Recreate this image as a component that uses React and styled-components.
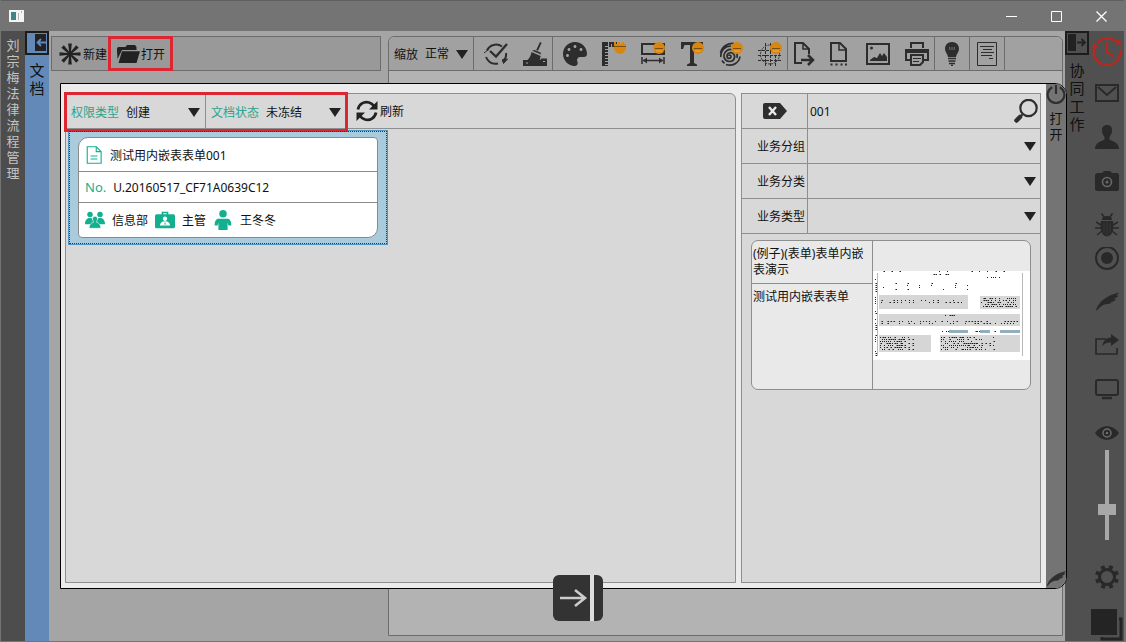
import React, { useState } from 'react';
import styled, { createGlobalStyle, css } from 'styled-components';
import { FaPalette } from 'react-icons/fa';

const GlobalStyle = createGlobalStyle`
  * {
    box-sizing: border-box;
  }
  body {
    margin: 0;
    background: #747474;
  }
  body, button, input, select {
    font-family: 'Noto Sans', 'Noto Sans CJK SC', sans-serif;
    font-size: 12px;
    color: #111;
  }
  button {
    padding: 0;
    border: none;
    background: none;
    cursor: pointer;
  }
  svg {
    display: block;
    flex: none;
  }
`;

/* ---------- window ---------- */

const Window = styled.div`
  position: relative;
  display: flex;
  flex-direction: column;
  height: 100vh;
  padding: 0 2px 1px 1px;
  background: #747474;
`;

const TitleBar = styled.header`
  display: flex;
  align-items: center;
  justify-content: space-between;
  flex: none;
  height: 31px;
  padding-left: 8px;
  border-top: 1px solid #606060;
`;

const WindowControls = styled.div`
  display: flex;
  height: 100%;
`;

const WindowButton = styled.button`
  display: flex;
  justify-content: center;
  align-items: center;
  width: 45px;
  color: #fff;
`;

const Body = styled.div`
  display: flex;
  flex: 1;
  min-height: 0;
`;

const SideBar = styled.aside`
  display: flex;
  flex-direction: column;
  align-items: center;
  flex: none;
  width: 24px;
  background: ${(props) => props.$bg};
`;

const VerticalText = styled.span`
  width: ${(props) => props.$size || 13}px;
  margin-top: 6px;
  font-size: ${(props) => props.$size || 13}px;
  line-height: ${(props) => (props.$size ? 18 : 16)}px;
  word-break: break-all;
  color: ${(props) => props.$color || '#111'};
`;

const ToggleButton = styled.button`
  display: flex;
  justify-content: center;
  align-items: center;
  width: 24px;
  height: 24px;
  border: 2px solid #1c1c1c;
  color: ${(props) => props.$color};
`;

const Workspace = styled.main`
  display: flex;
  flex: 1;
  min-width: 0;
  gap: 7px;
  padding: 5px 2px 5px 2px;
  background: #a5a5a5;
`;

/* ---------- toolbars ---------- */

const FileBar = styled.div`
  display: flex;
  flex: none;
  width: 330px;
  height: 35px;
  padding-left: 4px;
  border: 1px solid #6c6c6c;
  background: #999;
`;

const TextButton = styled.button`
  display: flex;
  align-items: center;
  gap: 1px;
  padding: 0 2px;
  ${(props) =>
    props.$marked &&
    css`
      padding: 0 7px;
      outline: 3px solid #dc2631;
      outline-offset: -2px;
    `}
`;

const Canvas = styled.section`
  flex: 1;
  min-width: 0;
  border: 1px solid #6c6c6c;
  border-radius: 6px 6px 0 0;
  background: #b3b3b3;
`;

const ToolBar = styled.div`
  display: flex;
  height: 34px;
  border-bottom: 1px solid #6c6c6c;
  border-radius: 6px 6px 0 0;
  background: #a1a1a1;
`;

const ToolGroup = styled.div`
  display: flex;
  border-right: 1px solid #6c6c6c;
`;

const ToolButton = styled.button`
  display: flex;
  justify-content: center;
  align-items: center;
  width: ${(props) => props.$width || 39}px;
  padding-left: ${(props) => (props.$centered ? 0 : 5)}px;
  color: #2d2d2d;
`;

const Field = styled.label`
  display: flex;
  align-items: center;
  gap: 7px;
  width: ${(props) => props.$width}px;
  padding: 0 5px;
`;

const FieldName = styled.span`
  flex: none;
  color: ${(props) => props.$color || '#111'};
`;

const Select = styled.select`
  flex: 1;
  min-width: 0;
  height: 24px;
  padding: 0;
  border: none;
  outline: none;
  appearance: none;
  background: transparent;
`;

/* ---------- open dialog ---------- */

const Dialog = styled.div`
  position: absolute;
  top: 83px;
  right: 59px;
  bottom: 53px;
  left: 60px;
  display: flex;
  border: 1px solid #000;
  border-radius: 0 12px 12px 0;
  background: #ebebeb;
  overflow: hidden;
`;

const Panels = styled.div`
  display: flex;
  flex: 1;
  gap: 5px;
  min-width: 0;
  padding: 9px 5px 5px 4px;
`;

const ListPanel = styled.section`
  flex: 1;
  min-width: 0;
  border: 1px solid #8e8e8e;
  border-radius: 0 6px 0 0;
  background: #d8d8d8;
`;

const FilterBar = styled.div`
  display: flex;
  height: 35px;
  border-bottom: 1px solid #8e8e8e;
`;

const Filters = styled.div`
  display: flex;
  height: 36px;
  outline: 3px solid #dc2631;
  outline-offset: -1px;
  margin-right: 7px;

  label + label {
    border-left: 1px solid #8e8e8e;
  }
`;

const SelectedItem = styled.div`
  width: 320px;
  margin: 1px 0 0 2px;
  padding: 6px 9px;
  border: 1px solid #4f95c4;
  outline: 1px dotted #123f68;
  outline-offset: -2px;
  background: #a9cbdb;
`;

const DocCard = styled.article`
  border: 1px solid #8a8a8a;
  border-radius: 10px 4px 10px 4px;
  background: #fff;
`;

const DocRow = styled.div`
  display: flex;
  align-items: center;
  gap: 7px;
  height: ${(props) => props.$height}px;
  padding: 0 6px;
  color: #13b090;

  & + & {
    border-top: 1px solid #8a8a8a;
  }
`;

const DocNumber = styled.span`
  font-size: 13px;
`;

const DocText = styled.span`
  color: #111;
`;

const SearchPanel = styled.section`
  flex: none;
  width: 300px;
  border: 1px solid #8e8e8e;
  background: #d8d8d8;
`;

const SearchRow = styled.div`
  display: grid;
  grid-template-columns: 65px 1fr;
  height: 35px;
  border-bottom: 1px solid #8e8e8e;
`;

const SearchLabel = styled.label`
  display: flex;
  justify-content: flex-end;
  align-items: center;
  padding-right: 2px;
`;

const ClearButton = styled.button`
  display: flex;
  justify-content: center;
  align-items: center;
`;

const SearchValue = styled.div`
  display: flex;
  align-items: center;
  min-width: 0;
  padding: 0 ${(props) => (props.$wide ? 2 : 4)}px 0 2px;
  border-left: 1px solid #8e8e8e;
`;

const SearchInput = styled.input`
  flex: 1;
  min-width: 0;
  padding: 0;
  border: none;
  outline: none;
  background: transparent;
`;

const TemplateCard = styled.article`
  display: grid;
  grid-template-columns: 121px 1fr;
  height: 150px;
  margin: 6px 9px;
  border: 1px solid #8e8e8e;
  border-radius: 7px;
  background: #e9e9e9;
`;

const TemplateInfo = styled.div`
  border-right: 1px solid #8e8e8e;
`;

const TemplateText = styled.p`
  margin: 0;
  padding: 5px 1px;
  line-height: 16px;

  & + & {
    border-top: 1px solid #8e8e8e;
  }
`;

const Preview = styled.div`
  display: flex;
  align-items: center;
`;

const DialogTab = styled.div`
  display: flex;
  flex-direction: column;
  align-items: center;
  justify-content: space-between;
  flex: none;
  width: 20px;
  background: #747474;
  color: #303030;
`;

const DialogTabHead = styled.div`
  display: flex;
  flex-direction: column;
  align-items: center;
`;

/* ---------- right rail ---------- */

const Rail = styled.nav`
  display: flex;
  flex-direction: column;
  align-items: center;
  flex: none;
  width: 35px;
  background: #505050;
`;

const RailButton = styled.button`
  display: flex;
  justify-content: center;
  align-items: ${(props) => props.$align || 'center'};
  flex: none;
  width: 100%;
  height: ${(props) => props.$height || 44}px;
  color: #292929;
`;

const Slider = styled.input`
  flex: none;
  width: 18px;
  height: 90px;
  margin: 5px 0 15px;
  appearance: none;
  background: transparent;
  writing-mode: vertical-lr;
  direction: rtl;

  &::-webkit-slider-runnable-track {
    width: 4px;
    height: 100%;
    margin: 0 auto;
    background: #a8a8a8;
  }
  &::-webkit-slider-thumb {
    appearance: none;
    width: 18px;
    height: 11px;
    margin-left: -7px;
    background: #a8a8a8;
  }
`;

const DockButton = styled.button`
  position: absolute;
  left: 553px;
  bottom: 21px;
  width: 50px;
  height: 46px;
  border-radius: 6px;
  background: #333;
  overflow: hidden;
`;

/* ---------- icons ---------- */

const Icon = ({ size = 24, children, ...rest }) => (
  <svg
    width={size}
    height={size}
    viewBox="0 0 24 24"
    fill="none"
    stroke="currentColor"
    strokeWidth="2"
    aria-hidden="true"
    {...rest}
  >
    {children}
  </svg>
);

const Arrow = () => (
  <svg width="12" height="10" viewBox="0 0 12 10" fill="#222" aria-hidden="true">
    <path d="M0 1h12L6 10z" />
  </svg>
);

// orange helmet badge on the "clear style" tools
const Badge = () => (
  <g stroke="none">
    <circle cx="18" cy="6" r="6" fill="#d8860f" />
    <path d="M14 6h8v1h-8z" fill="#7c4d10" />
    <path d="M15 9h6" stroke="#efae4a" strokeWidth="1" />
  </g>
);

const AsteriskIcon = () => (
  <Icon fill="#222" stroke="none">
    {[0, 45, 90, 135, 180, 225, 270, 315].map((angle) => (
      <path key={angle} d="M11.200 12L10.200 1.500h3.600L12.800 12z" transform={`rotate(${angle} 12 12)`} />
    ))}
  </Icon>
);

const FolderIcon = () => (
  <Icon fill="#222" stroke="none">
    <path d="M1 9V6.500L2 5h7.500l1.500-2h8l1.500 2v3H6L1.500 17z" />
    <path d="M6 9.200h18L20.500 21H2.500z" />
  </Icon>
);

const CheckCycleIcon = () => (
  <Icon size={24}>
    <path d="M6 9l6 5.500L23 2" strokeWidth="2.300" />
    <path d="M3 8.500C5.500 2.500 13 1 18 4.500M22 11c.5 3.500-1 6.500-3.500 8.500M2 15c2 5 6.500 7.500 12 6.500" />
    <path d="M0 11l4.500-3.500M23.500 17l-5 .5 1 4z" fill="currentColor" strokeWidth="1" />
  </Icon>
);

const BroomIcon = () => (
  <Icon fill="currentColor" stroke="none">
    <path d="M17 0l1.600.7-3.600 8-1.800-.8zM11.500 8l6 2.500.7 2-9-3.700zM8.500 10l9.200 4-1 4H4.500c2-2 3.500-4.500 4-8z" />
    <path d="M0 18h17l1.500-1.500H24V24H0z" />
    <path d="M3 21h2M20 19.500h2" stroke="#a1a1a1" strokeWidth="1" />
  </Icon>
);

const RulerIcon = () => (
  <Icon fill="currentColor" stroke="none">
    <path d="M0 0h6v24H0zM7 0h8v5H7z" />
    <path d="M3 4.500h3M3 7.500h3M3 10.500h3M3 13.500h3M3 16.500h3M3 19.500h3M3 22.500h3M9.500 2v3M12.500 2v3" stroke="#a1a1a1" strokeWidth="1" />
    <path d="M12 0h2v2h2V0h2v2h2V0h2v2h2v3c0 4-3 7-6 7s-6-3-6-7z" fill="#d8860f" />
    <path d="M12 4h12v1H12z" fill="#7c4d10" />
  </Icon>
);

const WidthIcon = () => (
  <Icon>
    <path d="M1 2h22v10H1z" />
    <path d="M1 15v7M23 15v7M2 18.500h20" strokeWidth="1.500" />
    <path d="M2 18.500l4-3v6zM22 18.500l-4-3v6z" fill="currentColor" stroke="none" />
    <Badge />
  </Icon>
);

const TypeIcon = () => (
  <Icon fill="currentColor" stroke="none">
    <path d="M1 0h22v7h-2l-1.500-4H14v18l3 1.500V24H7v-1.500l3-1.500V3H4.500L3 7H1z" />
    <Badge />
  </Icon>
);

const SpiralIcon = () => (
  <Icon strokeWidth="1.700">
    <path d="M10 14c0-1.500 2.500-1 2 1s-4 2-4-1 4-4.500 6.500-2 .5 7.500-3.500 7.500-6.500-3-6-6.500S9 7 13 7.500s6 4.500 5 8.500" />
    <path d="M2 15C1 8.500 6 4 12 4M1.500 11C3 4 9 1 15 1.500M7 22.500c6 2 13-1 14-8M3 18.500c.7 1 1.500 2 2.500 2.700" />
    <Badge />
  </Icon>
);

const GridIcon = () => (
  <Icon strokeWidth="1">
    <path d="M0 8.500h24M0 13.500h24M0 18.500h24M7.500 1v23M12.500 1v23M17.500 1v23" strokeDasharray="3 1" />
    <circle cx="12" cy="12.500" r="9.500" strokeDasharray="2 1" />
    <Badge />
  </Icon>
);

const PageExportIcon = () => (
  <Icon>
    <path d="M17 13V8l-6-6H3v20h7" transform="translate(-1 -1)" />
    <path d="M10 1v6h6" strokeWidth="1.500" />
    <path d="M8 18h11M15 13l5 5-5 5" strokeWidth="2.500" />
  </Icon>
);

const PageDotsIcon = () => (
  <Icon>
    <path d="M4 18V1h9l6 6v12H3" />
    <path d="M12 1v7h7" strokeWidth="1.500" />
    <path d="M3.500 22.500h2M8.500 22.500h2M13.500 22.500h2M18 22.500h2" />
  </Icon>
);

const ImageIcon = () => (
  <Icon>
    <path d="M1 2h22v20H1z" />
    <path d="M4 19v-1l4-3 3 1 3-5 2 3 2-3 3 4v4z" fill="currentColor" stroke="none" />
    <circle cx="5.500" cy="6" r="1.500" fill="currentColor" stroke="none" />
  </Icon>
);

const PrinterIcon = () => (
  <Icon>
    <path d="M6 6V1h12v5" />
    <path d="M5 18H1V8h22v10h-4" />
    <path d="M2 8h20v3H2z" fill="currentColor" stroke="none" />
    <path d="M6 13h12v7l-3 3H6z" />
    <path d="M8 16.500h8M8 19.500h6" strokeWidth="1" />
  </Icon>
);

const BulbIcon = () => (
  <Icon fill="currentColor" stroke="none">
    <path d="M12 0c4.500 0 7 3.200 7 6.800 0 3.500-2.500 5-3 8.200H8c-.5-3.200-3-4.700-3-8.200C5 3.200 7.500 0 12 0z" />
    <path d="M9.500 5l.5 3M12 5v3M14.500 5l-.5 3" stroke="#a1a1a1" strokeWidth=".6" />
    <path d="M8 16.500h8M8.500 19h7M9 21.500h6M11 23.500h2" stroke="currentColor" strokeWidth="1.400" />
  </Icon>
);

const SheetIcon = () => (
  <Icon strokeWidth="1">
    <path d="M2.500.5h19v23h-19z" />
    <path d="M5 4.500h14M8 7.500h9M6 10.500h13M6 13.500h11M14 16.500h4" />
  </Icon>
);

const RefreshIcon = () => (
  <Icon stroke="#222" strokeWidth="2.800">
    <path d="M3 10.500C4 5 9 2 14 3.500c2 .6 3.500 1.500 5 3.500M21 13.500c-1 5.500-6 8.500-11 7-2-.6-3.500-1.500-5-3.500" />
    <path d="M22.500 2v8.500H14zM1.500 22v-8.500H10z" fill="#222" stroke="none" />
  </Icon>
);

const DocIcon = () => (
  <Icon size={18} strokeWidth="1.500">
    <path d="M3 1h12l6.500 6.500V23H3z" />
    <path d="M15 1v6.500h6.500M7.500 13.300h9M7.500 17.300h9" />
  </Icon>
);

const TeamIcon = () => (
  <Icon size={20} fill="currentColor" stroke="none">
    <circle cx="6" cy="5.500" r="3.300" />
    <circle cx="18" cy="5.500" r="3.300" />
    <path d="M0 17c0-5 2-6.500 4.500-7.500h3L12 14l4.500-4.500h3C22 10.500 24 12 24 17z" />
    <path
      d="M12 7.500c2 0 3.200 1.500 3 3.500-.1 1.200-.6 2-1 2.600v1.200c2.500.8 5 2.200 5 7.200H5c0-5 2.500-6.400 5-7.200v-1.200c-.4-.6-.9-1.400-1-2.600-.2-2 1-3.500 3-3.500z"
      stroke="#fff"
      strokeWidth=".8"
    />
  </Icon>
);

const BadgeCaseIcon = () => (
  <Icon size={20} fill="currentColor" stroke="none">
    <path d="M8 5V2h8v3h6a2 2 0 0 1 2 2v13a2 2 0 0 1-2 2H2a2 2 0 0 1-2-2V7a2 2 0 0 1 2-2zm2 0h4V4h-4z" />
    <circle cx="12" cy="10.500" r="2.600" fill="#fff" />
    <path d="M6 18.500c0-3 2-5 6-5s6 2 6 5z" fill="#fff" />
    <path d="M12 14l1 3.500h-2z" />
  </Icon>
);

const PersonIcon = () => (
  <Icon size={20} fill="currentColor" stroke="none">
    <circle cx="12" cy="4.500" r="4.500" />
    <path d="M7 10.500h10c3.500 0 5 3 5 8h-3.500L17.500 15v9h-11v-9l-1 3.500H2c0-5 1.500-8 5-8z" />
  </Icon>
);

const ClearIcon = () => (
  <svg width="24" height="16" viewBox="0 0 24 16" aria-hidden="true">
    <path d="M2 0h15l7 8-7 8H2a2 2 0 0 1-2-2V2a2 2 0 0 1 2-2z" fill="#2e2e2e" />
    <path d="M6 4l7 8M13 4l-7 8" stroke="#e8e8e8" strokeWidth="2.400" />
  </svg>
);

const SearchIcon = () => (
  <Icon stroke="#2e2e2e">
    <circle cx="14.500" cy="9" r="8.200" strokeWidth="2.200" />
    <path d="M8.500 15.500L6 18" />
    <path d="M6 18l-3.500 3.500" strokeWidth="4.500" strokeLinecap="round" />
  </Icon>
);

const PowerIcon = () => (
  <Icon size={20} strokeWidth="2.600">
    <path d="M7.500 4a10 10 0 1 0 9 0" />
    <path d="M12 1v11" />
  </Icon>
);

const FeatherIcon = ({ size = 24 }) => (
  <Icon size={size} fill="currentColor" stroke="none">
    <path d="M1 21C3 15 9 7 24 3.500c-.5 1.500-2 2.500-3 2.800l2.500.4c-1.500 1.800-3.500 2.800-5 3l2.500.8c-2 2-4 2.500-6 2.800l1.500.7c-2 1-4 1-6 1.300-3.500.8-6 3-8.500 6.200z" />
  </Icon>
);

const ClockIcon = () => (
  <Icon size={30} stroke="#b5291f" strokeWidth="2">
    <path d="M2.300 8.500A10.600 10.600 0 1 0 22.400 10.500" />
    <path d="M4.500 5.500A10.600 10.600 0 0 1 19.500 4.500" />
    <path d="M12 5v8l5 3" strokeWidth="1.700" />
    <path d="M0 10l1.500-5 4 4zM24 7l-6-.5 4-4z" fill="#b5291f" stroke="none" />
  </Icon>
);

const MailIcon = () => (
  <Icon>
    <path d="M1 4h22v16H1zM3 6l9 8 9-8" />
  </Icon>
);

const UserIcon = () => (
  <Icon fill="currentColor" stroke="none">
    <path d="M12 0c3.500 0 5.500 2.500 5 6-.2 3-1.500 4.500-2.500 6v2.500c2 1.500 9.500 2.500 9.500 9.500H0c0-7 7.500-8 9.500-9.500V12C8.500 10.500 7.200 9 7 6c-.5-3.500 1.500-6 5-6z" />
  </Icon>
);

const CameraIcon = () => (
  <Icon fill="currentColor" stroke="none">
    <path d="M3 4h4l2-2h6l2 2h5a2 2 0 0 1 2 2v14a2 2 0 0 1-2 2H2a2 2 0 0 1-2-2V6c0-1 1-2 3-2z" />
    <circle cx="12" cy="13" r="4.500" stroke="#686868" strokeWidth="1.600" />
    <circle cx="12" cy="13" r="1.500" fill="#686868" />
  </Icon>
);

const BugIcon = () => (
  <Icon strokeWidth="1.600">
    <path d="M7 7c0-3 2-4 5-4s5 1 5 4z" fill="currentColor" stroke="none" />
    <path d="M6 8h12c1.500 9-1 15-6 15.500C7 23 4.500 17 6 8z" fill="currentColor" stroke="none" />
    <path d="M9 4L6.500.5M15 4L17.500.5M6 12L1 9M6 15H0M7 18l-5 4M18 12l5-3M18 15h6M17 18l5 4" />
    <path d="M12 8v15M9 10v10M15 10v10" stroke="#505050" strokeWidth=".4" />
  </Icon>
);

const RecordIcon = () => (
  <Icon>
    <circle cx="12" cy="11" r="11" />
    <circle cx="12" cy="11" r="6" fill="currentColor" stroke="none" />
  </Icon>
);

const ShareIcon = () => (
  <Icon strokeWidth="1.700">
    <path d="M11 6H1v15h21v-6" />
    <path d="M16 1l8 6-8 6v-3.500c-4 0-6 .5-9 4C8 8 11 5 16 4.500z" fill="currentColor" stroke="none" />
  </Icon>
);

const MonitorIcon = () => (
  <Icon>
    <rect x="1" y="3" width="22" height="15" rx="2" />
    <path d="M7 21h10" strokeWidth="2.500" />
  </Icon>
);

const EyeIcon = () => (
  <Icon fill="currentColor" stroke="none">
    <path d="M0 12c6-9 18-9 24 0-6 9-18 9-24 0z" />
    <circle cx="12" cy="12" r="4" stroke="#6c6c6c" strokeWidth="1.500" />
    <circle cx="12" cy="12" r="1.300" fill="#6c6c6c" />
  </Icon>
);

const GearIcon = () => (
  <Icon>
    <circle cx="12" cy="12" r="7.500" strokeWidth="3" />
    {[22, 67, 112, 157, 202, 247, 292, 337].map((angle) => (
      <path key={angle} d="M12 4V0" strokeWidth="4" transform={`rotate(${angle} 12 12)`} />
    ))}
  </Icon>
);

const LayersIcon = () => (
  <svg width="33" height="32" viewBox="0 0 33 32" aria-hidden="true">
    <path d="M12 10h19v20H12z" fill="none" stroke="#242424" strokeWidth="3" />
    <path d="M0 0h29v28H0z" fill="#505050" />
    <path d="M1 0h26v26H1z" fill="#242424" />
  </svg>
);

const specks = (x, y, width, height, step, seed) => {
  let d = '';
  let n = seed;
  for (let py = y; py < y + height; py += 2) {
    for (let px = x; px < x + width; px += step) {
      n = (n * 1103515245 + 12345) % 2147483648;
      if ((n >> 12) % 5 < 3) d += `M${px} ${py}h${1 + ((n >> 8) % 2)}v1h-1z`;
    }
  }
  return d;
};

const FormPreview = () => (
  <svg width="100%" viewBox="0 0 157 89" role="img" aria-label="表单预览">
    <path d="M0 0h157v89H0z" fill="#fff" />
    <path
      d="M6 24h89v14H6zM107 25h40v13h-40zM6 43h141v12H6zM6 64h52v17H6zM67 64h80v17H67z"
      fill="#d6d6d6"
    />
    <path d="M76 59h19v3H76zM107 59h10v3h-10zM127 59h20v3h-20z" fill="#91aebd" />
    <path d="M4.500 2v83M149.500 2v83" stroke="#b8b8b8" strokeWidth="1" />
    <path
      d={
        specks(2, 0, 140, 2, 8, 7) +
        specks(58, 3, 18, 2, 2, 11) +
        specks(114, 6, 14, 2, 2, 5) +
        specks(10, 12, 85, 8, 12, 21) +
        specks(8, 29, 84, 4, 4, 31) +
        specks(108, 27, 36, 10, 2, 41) +
        specks(70, 44, 12, 2, 2, 3) +
        specks(8, 50, 138, 3, 3, 51) +
        specks(69, 60, 7, 2, 2, 9) +
        specks(102, 60, 5, 2, 2, 13) +
        specks(119, 60, 6, 2, 2, 17) +
        specks(7, 66, 24, 14, 2, 61) +
        specks(31, 66, 12, 14, 4, 67) +
        specks(68, 66, 40, 14, 2, 71) +
        specks(108, 66, 15, 14, 4, 77) +
        specks(2, 8, 2, 78, 3, 81)
      }
      fill="#222"
    />
  </svg>
);

/* ---------- data ---------- */

const toolGroups = [
  [
    { name: '校验', icon: CheckCycleIcon },
    { name: '清理', icon: BroomIcon },
  ],
  [
    { name: '配色', icon: () => <FaPalette size={24} /> },
    { name: '标尺', icon: RulerIcon },
    { name: '宽度', icon: WidthIcon },
    { name: '字体', icon: TypeIcon },
    { name: '指纹', icon: SpiralIcon },
    { name: '网格', icon: GridIcon },
  ],
  [
    { name: '导出', icon: PageExportIcon, width: 29 },
    { name: '分页', icon: PageDotsIcon },
    { name: '图片', icon: ImageIcon },
    { name: '打印', icon: PrinterIcon },
  ],
  [{ name: '提示', icon: BulbIcon, width: 34, centered: true }],
  [{ name: '说明', icon: SheetIcon, width: 34, centered: true }],
];

const railItems = [
  { name: '时钟', icon: ClockIcon, height: 40 },
  { name: '邮件', icon: MailIcon },
  { name: '用户', icon: UserIcon },
  { name: '拍照', icon: CameraIcon },
  { name: '调试', icon: BugIcon },
  { name: '录制', icon: RecordIcon, height: 32, align: 'flex-start' },
  { name: '签名', icon: FeatherIcon },
  { name: '分享', icon: ShareIcon },
  { name: '屏幕', icon: MonitorIcon },
  { name: '查看', icon: EyeIcon, height: 34, align: 'flex-end' },
];

const categories = ['业务分组', '业务分类', '业务类型'];

const App = () => {
  const [keyword, setKeyword] = useState('001');
  const [opacity, setOpacity] = useState(32);

  return (
    <>
      <GlobalStyle />
      <Window>
        <TitleBar>
          <svg width="15" height="12" viewBox="0 0 15 12" aria-hidden="true">
            <path d="M0 0h15v12H0z" fill="#f4f4f4" />
            <path d="M2 2h5v8H2z" fill="#3d8583" />
            <path d="M9 3h1v7H9zM12 1h1v2h-1z" fill="#a9b8b8" />
          </svg>
          <WindowControls>
            <WindowButton aria-label="最小化">
              <svg width="11" height="11" stroke="currentColor">
                <path d="M0 5.500h11" />
              </svg>
            </WindowButton>
            <WindowButton aria-label="最大化">
              <svg width="11" height="11" stroke="currentColor" fill="none">
                <path d="M.5.5h10v10H.5z" />
              </svg>
            </WindowButton>
            <WindowButton aria-label="关闭">
              <svg width="11" height="11" stroke="currentColor">
                <path d="M.5.5l10 10M10.500.5l-10 10" strokeWidth="1.300" />
              </svg>
            </WindowButton>
          </WindowControls>
        </TitleBar>

        <Body>
          <SideBar $bg="#4d4d4d">
            <VerticalText $color="#c4c4c4">刘宗梅法律流程管理</VerticalText>
          </SideBar>
          <SideBar $bg="#6289b8">
            <ToggleButton $color="#6289b8" aria-label="收起文档">
              <svg width="20" height="20" viewBox="0 0 20 20" aria-hidden="true">
                <path d="M8 1h11v17H8z" fill="#222" />
                <path d="M19 9.500h-8M14 6l-3.500 3.500L14 13" fill="none" stroke="currentColor" strokeWidth="1.800" />
              </svg>
            </ToggleButton>
            <VerticalText $size={15}>文档</VerticalText>
          </SideBar>

          <Workspace>
            <FileBar>
              <TextButton>
                <AsteriskIcon />
                新建
              </TextButton>
              <TextButton $marked>
                <FolderIcon />
                打开
              </TextButton>
            </FileBar>
            <Canvas>
              <ToolBar>
                <ToolGroup>
                  <Field $width={84}>
                    <FieldName>缩放</FieldName>
                    <Select defaultValue="正常">
                      <option>正常</option>
                    </Select>
                    <Arrow />
                  </Field>
                </ToolGroup>
                {toolGroups.map((group, index) => (
                  <ToolGroup key={index}>
                    {group.map(({ name, icon: ToolIcon, width, centered }) => (
                      <ToolButton key={name} aria-label={name} $width={width} $centered={centered}>
                        <ToolIcon />
                      </ToolButton>
                    ))}
                  </ToolGroup>
                ))}
              </ToolBar>
            </Canvas>
          </Workspace>

          <SideBar $bg="#505050">
            <ToggleButton $color="#222" aria-label="收起协同工作">
              <svg width="20" height="20" viewBox="0 0 20 20" aria-hidden="true">
                <path d="M1 1h8v17H1z" fill="#222" />
                <path d="M10 9.500h8M14.500 6L18 9.500 14.500 13" fill="none" stroke="currentColor" strokeWidth="1.800" />
              </svg>
            </ToggleButton>
            <VerticalText $size={15}>协同工作</VerticalText>
          </SideBar>
          <Rail>
            {railItems.map(({ name, icon: RailIcon, height, align }) => (
              <RailButton key={name} aria-label={name} $height={height} $align={align}>
                <RailIcon />
              </RailButton>
            ))}
            <Slider
              type="range"
              aria-label="透明度"
              value={opacity}
              onChange={(e) => setOpacity(Number(e.target.value))}
            />
            <RailButton aria-label="设置">
              <GearIcon />
            </RailButton>
            <RailButton aria-label="窗口" $height={42} $align="flex-end">
              <LayersIcon />
            </RailButton>
          </Rail>
        </Body>

        <Dialog role="dialog" aria-label="打开">
          <Panels>
            <ListPanel>
              <FilterBar>
                <Filters>
                  <Field $width={139}>
                    <FieldName $color="#2ba38c">权限类型</FieldName>
                    <Select defaultValue="创建">
                      <option>创建</option>
                    </Select>
                    <Arrow />
                  </Field>
                  <Field $width={141}>
                    <FieldName $color="#2ba38c">文档状态</FieldName>
                    <Select defaultValue="未冻结">
                      <option>未冻结</option>
                    </Select>
                    <Arrow />
                  </Field>
                </Filters>
                <TextButton>
                  <RefreshIcon />
                  刷新
                </TextButton>
              </FilterBar>
              <SelectedItem>
                <DocCard>
                  <DocRow $height={33}>
                    <DocIcon />
                    <DocText>测试用内嵌表表单001</DocText>
                  </DocRow>
                  <DocRow $height={31}>
                    <DocNumber>No.</DocNumber>
                    <DocText>U.20160517_CF71A0639C12</DocText>
                  </DocRow>
                  <DocRow $height={35}>
                    <TeamIcon />
                    <DocText>信息部</DocText>
                    <BadgeCaseIcon />
                    <DocText>主管</DocText>
                    <PersonIcon />
                    <DocText>王冬冬</DocText>
                  </DocRow>
                </DocCard>
              </SelectedItem>
            </ListPanel>

            <SearchPanel>
              <SearchRow>
                <ClearButton aria-label="清除" onClick={() => setKeyword('')}>
                  <ClearIcon />
                </ClearButton>
                <SearchValue $wide>
                  <SearchInput
                    aria-label="关键字"
                    value={keyword}
                    onChange={(e) => setKeyword(e.target.value)}
                  />
                  <button aria-label="搜索">
                    <SearchIcon />
                  </button>
                </SearchValue>
              </SearchRow>
              {categories.map((name) => (
                <SearchRow key={name}>
                  <SearchLabel htmlFor={name}>{name}</SearchLabel>
                  <SearchValue>
                    <Select id={name} />
                    <Arrow />
                  </SearchValue>
                </SearchRow>
              ))}
              <TemplateCard>
                <TemplateInfo>
                  <TemplateText>(例子)(表单)表单内嵌表演示</TemplateText>
                  <TemplateText>测试用内嵌表表单</TemplateText>
                </TemplateInfo>
                <Preview>
                  <FormPreview />
                </Preview>
              </TemplateCard>
            </SearchPanel>
          </Panels>
          <DialogTab>
            <DialogTabHead>
              <PowerIcon />
              <VerticalText>打开</VerticalText>
            </DialogTabHead>
            <FeatherIcon size={20} />
          </DialogTab>
        </Dialog>

        <DockButton aria-label="停靠">
          <svg width="50" height="46" viewBox="0 0 50 46" fill="none" aria-hidden="true">
            <path d="M7 23h24M22 15l10 8-10 8" stroke="#ccc" strokeWidth="2.600" />
            <path d="M39 0v46" stroke="#ddd" strokeWidth="4" />
          </svg>
        </DockButton>
      </Window>
    </>
  );
};

export default App;
